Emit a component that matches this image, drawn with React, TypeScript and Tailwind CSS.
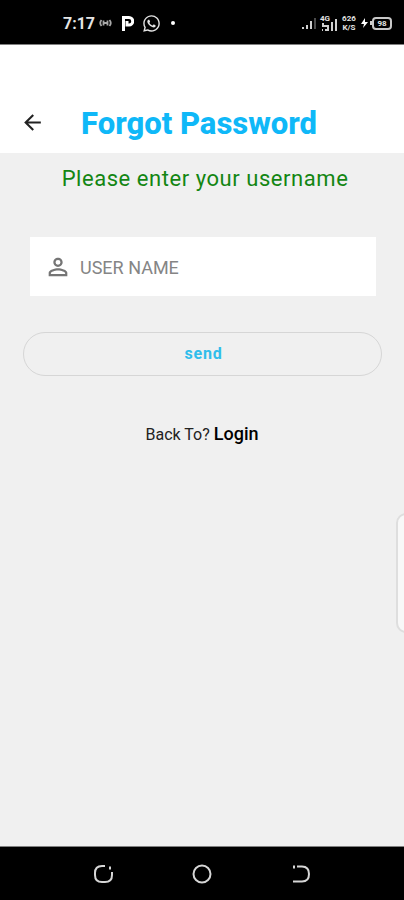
import React, { useState } from "react";
import { FaWhatsapp } from "react-icons/fa";
import { MdArrowBack, MdPersonOutline } from "react-icons/md";

interface UsernameFormProps {
  onSend: (username: string) => void;
}

const StatusBar = () => (
  <div className="flex h-[45px] shrink-0 items-center justify-between border-b border-[#808080] bg-black pl-[63px] pr-3 pt-0.5 text-[#e4e4e4]">
    <div className="flex items-center">
      <span className="w-9 pt-0.5 text-base font-bold">7:17</span>
      <svg width="13" height="10" viewBox="0 0 13 10" fill="none" stroke="#a8a8a8">
        <path d="M2.5 2Q0 5 2.5 8M10.5 2Q13 5 10.5 8" strokeWidth="1.8" />
        <path d="M4.5 2.5v5M8.5 2.5v5M4 5h5" strokeWidth="1.8" />
      </svg>
      <svg className="ml-2.5" width="12" height="15" viewBox="0 0 12 15" fill="none" stroke="#fff">
        <path d="M1.5 15V1.5H7a3.7 3.7 0 0 1 0 7.5H5V5" strokeWidth="3" />
      </svg>
      <FaWhatsapp className="ml-2" size={19} />
      <span className="ml-2.5 size-1 rounded-full bg-white" />
    </div>
    <div className="flex items-center">
      <svg width="14" height="12" viewBox="0 0 14 12" fill="#d0d0d0">
        <path d="M0 10h2v2H0zM4 8h2v4H4zM8 4h2v8H8z" />
        <path d="M12 1h2v11h-2z" fill="#4a4a4a" />
      </svg>
      <div className="ml-1 flex w-5 items-end">
        <div className="flex flex-col items-center">
          <span className="text-[8px] font-bold leading-[8px]">4G</span>
          <svg width="9" height="8" viewBox="0 0 9 8" fill="none" stroke="#d0d0d0" strokeWidth="2">
            <path d="M2 0v3h5v4H4M1 7h1" />
          </svg>
        </div>
        <svg width="9" height="14" viewBox="0 0 9 14" fill="#d0d0d0">
          <path d="M1 5h2v9H1zM5 2h2v12H5z" />
        </svg>
      </div>
      <div className="ml-px flex w-4 flex-col items-center text-[8px] font-bold leading-[9px]">
        <span>626</span>
        <span>K/S</span>
      </div>
      <svg className="ml-1" width="7" height="10" viewBox="0 0 7 10" fill="#fff">
        <path d="M4 0 0 6h3L2 10 7 4H4z" />
      </svg>
      <span className="ml-0.5 h-1 w-0.5 bg-[#d0d0d0]" />
      <span className="flex h-[13px] w-5 items-center justify-center rounded-[4px] border-2 border-[#c8c8c8] text-[8px] font-bold leading-[9px]">
        98
      </span>
    </div>
  </div>
);

const Header = () => (
  <header className="flex h-[108px] shrink-0 items-end bg-white px-5 pb-[11px]">
    <button type="button" aria-label="Go back" className="mb-[7px] text-[#222]">
      <MdArrowBack size={25} />
    </button>
    <h1 className="ml-9 text-[31px] font-extrabold leading-9 text-[#0fb8f8]">
      Forgot Password
    </h1>
  </header>
);

const UsernameForm = ({ onSend }: UsernameFormProps) => {
  const [username, setUsername] = useState("");

  const handleSubmit = (event: React.FormEvent<HTMLFormElement>) => {
    event.preventDefault();
    onSend(username);
  };

  return (
    <form onSubmit={handleSubmit} className="mt-10">
      <div className="ml-[30px] mr-7 flex h-[59px] items-center bg-white px-3.5">
        <label htmlFor="username" aria-label="User name" className="text-[#757575]">
          <MdPersonOutline size={28} />
        </label>
        <input
          type="text"
          id="username"
          name="username"
          value={username}
          onChange={(event) => setUsername(event.target.value)}
          placeholder="USER NAME"
          className="ml-2 min-w-0 flex-1 pt-0.5 text-lg text-[#222] outline-none placeholder:text-[#858585]"
        />
      </div>
      <div className="mt-9 pl-[23px] pr-[22px]">
        <button
          type="submit"
          className="h-11 w-full rounded-full border border-[#d6d6d6] pl-0.5 text-base font-bold tracking-wider text-[#30bdeb]"
        >
          send
        </button>
      </div>
    </form>
  );
};

const NavigationBar = () => (
  <nav className="flex h-[54px] shrink-0 items-center justify-center gap-[75px] border-t border-[#808080] bg-black">
    <button type="button" aria-label="Recent apps">
      <svg width="24" height="24" viewBox="0 0 24 24" fill="none" stroke="#d6d6d6" strokeWidth="2">
        <path d="M14 4H11Q4 4 4 11V13Q4 20 11 20H14Q21 20 21 13V10" />
        <path d="M18 6h2" strokeWidth="3" />
      </svg>
    </button>
    <button type="button" aria-label="Home">
      <svg width="24" height="24" viewBox="0 0 24 24" fill="none" stroke="#d6d6d6" strokeWidth="2">
        <circle cx="12" cy="12" r="8.5" />
      </svg>
    </button>
    <button type="button" aria-label="Back">
      <svg width="24" height="24" viewBox="0 0 24 24" fill="none" stroke="#d6d6d6" strokeWidth="2">
        <path d="M8 4.5h5Q20 4.5 20 12T13 19.5H4" />
        <path d="M4 5h2" strokeWidth="3" />
      </svg>
    </button>
  </nav>
);

const App = () => {
  const [, setSentTo] = useState("");

  return (
    <div className="relative flex min-h-screen flex-col overflow-hidden bg-[#f0f0f0] font-[Roboto,sans-serif]">
      <StatusBar />
      <Header />
      <main className="flex-1">
        <p className="pl-1.5 pt-2 text-center text-[22px] leading-9 tracking-wide text-[#138613]">
          Please enter your username
        </p>
        <UsernameForm onSend={setSentTo} />
        <p className="mt-11 text-center text-base leading-7 text-[#222]">
          Back To?{" "}
          <a href="#login" className="text-lg font-medium text-black">
            Login
          </a>
        </p>
      </main>
      {/* edge panel handle, mostly off screen */}
      <div className="absolute -right-3 top-[513px] h-[120px] w-5 rounded-xl border-2 border-[#dedede] bg-[#f8f8f8]" />
      <NavigationBar />
    </div>
  );
};

export default App;
